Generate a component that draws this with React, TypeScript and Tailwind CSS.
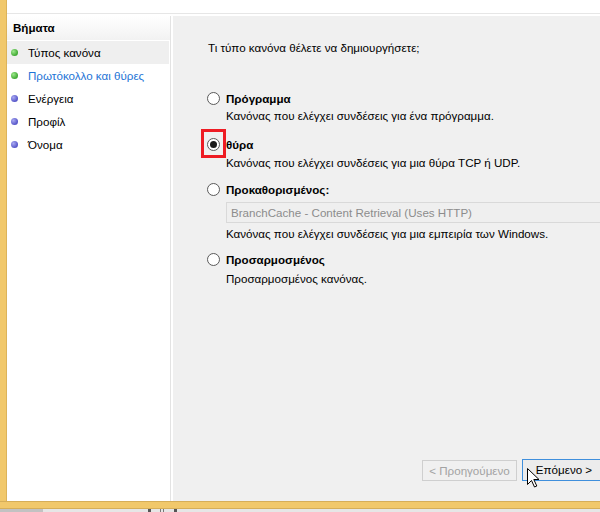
import React from "react";

const Bullet = ({ green }: { green: boolean }) => (
  <span
    className={
      green
        ? "inline-block w-[7px] h-[7px] rounded-full bg-[radial-gradient(circle_at_35%_35%,#9be88a,#3fa832_70%)]"
        : "inline-block w-[7px] h-[7px] rounded-full bg-[radial-gradient(circle_at_35%_35%,#a9a9f2,#5555c8_70%)]"
    }
  />
);

const Radio = ({ checked }: { checked?: boolean }) => (
  <span className="w-[13px] h-[13px] rounded-full border border-[#5a5a5a] bg-white flex items-center justify-center shrink-0">
    {checked && <span className="w-[7px] h-[7px] rounded-full bg-[#1a1a1a]" />}
  </span>
);

export default function App() {
  const steps = [
    { label: "Τύπος κανόνα", green: true, selected: true, link: false },
    { label: "Πρωτόκολλο και θύρες", green: true, selected: false, link: true },
    { label: "Ενέργεια", green: false, selected: false, link: false },
    { label: "Προφίλ", green: false, selected: false, link: false },
    { label: "Όνομα", green: false, selected: false, link: false },
  ];
  return (
    <div className="relative w-[600px] h-[512px] overflow-hidden bg-white font-['Liberation_Sans',Arial,sans-serif] text-[11.6px] text-black flex flex-col">
      <div className="flex flex-1 min-h-0">
        <div className="w-[7px] bg-[#f1c86b] border-r border-[#dcb35a]" />
        <div className="flex-1 flex flex-col min-w-0">
          <div className="h-[13px] bg-white" />
          <div className="h-px bg-[#e6e6e6]" />
          <div className="h-[2px] bg-white" />
          <div className="flex flex-1 min-h-0">
            {/* Sidebar */}
            <div className="w-[164px] bg-white border-r border-[#e3e3e3] flex flex-col">
              <div className="h-[25px] border-b border-white bg-[linear-gradient(#ffffff,#f2f2f2)] flex items-center pl-[6px] font-bold">
                Βήματα
              </div>
              {steps.map((s) => (
                <div
                  key={s.label}
                  className={
                    "h-[23px] flex items-center " + (s.selected ? "bg-[#efefef] mr-px" : "")
                  }
                >
                  <span className="w-[21px] pl-[4px] flex items-center">
                    <Bullet green={s.green} />
                  </span>
                  <span className={s.link ? "text-[#1e74d6]" : "text-black"}>{s.label}</span>
                </div>
              ))}
            </div>
            <div className="w-[2px] bg-white" />
            {/* Main */}
            <div className="relative flex-1 bg-[#f0f0f0] flex flex-col pl-[35px] min-w-0">
              <div className="mt-[23px] h-[17px] leading-[17px]">
                Τι τύπο κανόνα θέλετε να δημιουργήσετε;
              </div>

              <div className="mt-[34px] h-[17px] leading-[17px] flex items-center -ml-[1px]">
                <Radio />
                <span className="ml-[6px] font-bold">Πρόγραμμα</span>
              </div>
              <div className="h-[17px] leading-[17px] pl-[18px]">
                Κανόνας που ελέγχει συνδέσεις για ένα πρόγραμμα.
              </div>

              <div className="mt-[12px] h-[17px] leading-[17px] flex items-center -ml-[1px]">
                <Radio checked />
                <span className="ml-[6px] font-bold">θύρα</span>
              </div>
              <div className="mt-px h-[17px] leading-[17px] pl-[18px]">
                Κανόνας που ελέγχει συνδέσεις για μια θύρα TCP ή UDP.
              </div>

              <div className="mt-[10px] h-[17px] leading-[17px] flex items-center -ml-[1px]">
                <Radio />
                <span className="ml-[6px] font-bold">Προκαθορισμένος:</span>
              </div>
              <div className="mt-[4px] ml-[18px] h-[21px] w-[400px] border border-[#d9d9d9] bg-[#efefef] flex items-center pl-[4px] text-[#8c8c8c]">
                BranchCache - Content Retrieval (Uses HTTP)
              </div>
              <div className="mt-[2px] h-[17px] leading-[17px] pl-[18px]">
                Κανόνας που ελέγχει συνδέσεις για μια εμπειρία των Windows.
              </div>

              <div className="mt-[9px] h-[17px] leading-[17px] flex items-center -ml-[1px]">
                <Radio />
                <span className="ml-[6px] font-bold">Προσαρμοσμένος</span>
              </div>
              <div className="mt-[2px] h-[17px] leading-[17px] pl-[18px]">
                Προσαρμοσμένος κανόνας.
              </div>

              <div className="mt-auto mb-[20px] ml-[214px] flex items-end gap-[5px]">
                <div className="w-[95px] h-[21px] shrink-0 border border-[#cfcfcf] bg-[#f0f0f0] text-[#a3a3a3] flex items-center justify-center">
                  &lt; Προηγούμενο
                </div>
                <div className="w-[84px] h-[22px] shrink-0 border border-[#3f8fdc] bg-[#ececec] flex items-center justify-center">
                  Επόμενο &gt;
                </div>
              </div>

              {/* red highlight around radio */}
              <div className="absolute left-[28px] top-[113px] w-[25px] h-[29px] border-[3px] border-[#ee1c24]" />
            </div>
          </div>
        </div>
      </div>
      <div className="h-[8px] bg-[#f1c86b] border-t border-b border-[#d6ae58]" />
      <div className="h-[3px] flex bg-[#e6e6e6]">
        <div className="w-[43px] bg-[#c2c2c2]" />
        <div className="ml-[105px] w-[3px] bg-[#555]" />
        <div className="ml-[9px] w-px bg-[#777]" />
        <div className="ml-[2px] w-px bg-[#777]" />
        <div className="ml-[10px] w-[3px] bg-[#555]" />
      </div>

      {/* cursor */}
      <svg
        className="absolute left-[527px] top-[468px]"
        width="13"
        height="21"
        viewBox="0 0 13 21"
      >
        <path
          d="M0.5 0.5 L0.5 16.5 L4.5 12.5 L7.5 19 L9.8 18 L6.8 11.5 L12 11.5 Z"
          fill="white"
          stroke="black"
          strokeWidth="1"
          strokeLinejoin="miter"
        />
      </svg>
    </div>
  );
}
